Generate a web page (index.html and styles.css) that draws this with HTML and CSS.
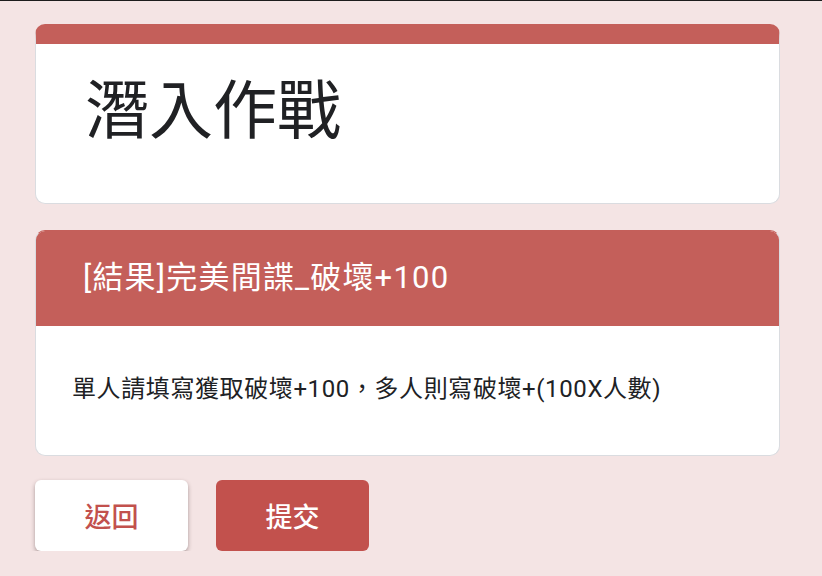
FILE: index.html
```html
<!DOCTYPE html>
<html lang="zh-Hant">
<head>
    <meta charset="UTF-8">
    <meta name="viewport" content="width=device-width, initial-scale=1.0">
    <title>潛入作戰</title>
    <link rel="stylesheet" href="styles.css">
</head>
<body>

    <main class="form-wrap">
        <section class="card title-card">
            <h1 class="form-title">潛入作戰</h1>
        </section>

        <section class="card section-card">
            <header class="section-head">[結果]完美間諜_破壞+100</header>
            <div class="section-body">
                <p>單人請填寫獲取破壞+100，多人則寫破壞+(100X人數)</p>
            </div>
        </section>

        <div class="actions">
            <button class="btn btn-back" type="button">返回</button>
            <button class="btn btn-submit" type="submit">提交</button>
        </div>
    </main>

</body>
</html>
```

FILE: styles.css
```css
/* --- BASE --- */
body {
    margin: 0;
    padding: 0;
    background-color: #f4e4e4;
    border-top: 1px solid #1c1c1c;
    color: #202124;
    font-family: Roboto, "Noto Sans CJK TC", sans-serif;
}

.form-wrap {
    width: 745px;
    margin-left: 35px;
    padding-top: 23px;
}

/* --- CARDS --- */
.card {
    background-color: #fff;
    border: 1px solid #dadce0;
    border-radius: 10px;
    overflow: hidden;
    margin-bottom: 26px;
}

.title-card {
    border-top: 20px solid #c45f5a;
}

.form-title {
    margin: 0;
    padding: 30px 0 53px 49px;
    font-size: 64px;
    font-weight: 400;
    line-height: 76px;
}

.section-card {
    border-color: #c45f5a #dadce0 #dadce0;
    margin-bottom: 24px;
}

.section-head {
    background-color: #c45f5a;
    color: #fff;
    font-size: 31px;
    letter-spacing: 1.2px;
    line-height: 40px;
    padding: 27px 0 28px 47px;
}

.section-body {
    padding: 46px 36px 49px;
}

.section-body p {
    margin: 0;
    font-size: 24px;
    letter-spacing: 0.6px;
    line-height: 34px;
}

/* --- BUTTONS --- */
.actions {
    display: flex;
    gap: 28px;
}

.btn {
    width: 153px;
    height: 71px;
    border: none;
    border-radius: 6px;
    font-family: "Noto Sans CJK TC", sans-serif;
    font-size: 27px;
    font-weight: 500;
    cursor: pointer;
}

.btn-back {
    background-color: #fff;
    color: #c2514d;
    box-shadow: 0 2px 4px rgba(60, 40, 40, 0.4);
}

.btn-submit {
    background-color: #c2514d;
    color: #fff;
}
```
